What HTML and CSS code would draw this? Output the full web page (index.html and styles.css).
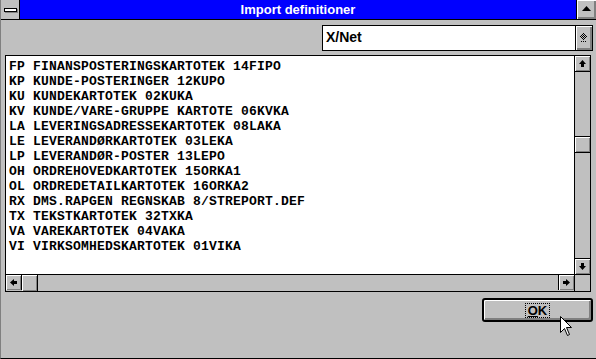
FILE: index.html
```html
<!DOCTYPE html>
<html lang="da">
<head>
    <meta charset="UTF-8">
    <title>Import definitioner</title>
    <link rel="stylesheet" href="styles.css">
</head>
<body>
    <div class="dialog">
        <div class="titlebar">
            <div class="sysmenu"><span class="sysbar"></span></div>
            <div class="title">Import definitioner</div>
            <div class="maxbtn">
                <svg width="9" height="5" viewBox="0 0 9 5"><polygon points="4.5,0 9,5 0,5" fill="#000"/></svg>
            </div>
        </div>

        <div class="content">
            <div class="combo-row">
                <div class="combo">
                    <div class="combo-field">X/Net</div>
                    <div class="combo-btn">
                        <svg width="8" height="10" viewBox="0 0 8 10" shape-rendering="crispEdges">
                            <rect x="3" y="0" width="1" height="1"/>
                            <rect x="2" y="1" width="1" height="1"/><rect x="4" y="1" width="1" height="1"/>
                            <rect x="1" y="2" width="1" height="1"/><rect x="3" y="2" width="1" height="1"/><rect x="5" y="2" width="1" height="1"/>
                            <rect x="0" y="3" width="1" height="1"/><rect x="2" y="3" width="1" height="1"/><rect x="4" y="3" width="1" height="1"/><rect x="6" y="3" width="1" height="1"/>
                            <rect x="1" y="4" width="1" height="1"/><rect x="3" y="4" width="1" height="1"/><rect x="5" y="4" width="1" height="1"/>
                            <rect x="2" y="5" width="1" height="1"/><rect x="4" y="5" width="1" height="1"/>
                            <rect x="3" y="6" width="1" height="1"/>
                            <rect x="1" y="8" width="1" height="1"/><rect x="3" y="8" width="1" height="1"/><rect x="5" y="8" width="1" height="1"/>
                        </svg>
                    </div>
                </div>
            </div>

            <div class="listbox">
                <div class="items">FP FINANSPOSTERINGSKARTOTEK 14FIPO
KP KUNDE-POSTERINGER 12KUPO
KU KUNDEKARTOTEK 02KUKA
KV KUNDE/VARE-GRUPPE KARTOTE 06KVKA
LA LEVERINGSADRESSEKARTOTEK 08LAKA
LE LEVERANDØRKARTOTEK 03LEKA
LP LEVERANDØR-POSTER 13LEPO
OH ORDREHOVEDKARTOTEK 15ORKA1
OL ORDREDETAILKARTOTEK 16ORKA2
RX DMS.RAPGEN REGNSKAB 8/STREPORT.DEF
TX TEKSTKARTOTEK 32TXKA
VA VAREKARTOTEK 04VAKA
VI VIRKSOMHEDSKARTOTEK 01VIKA</div>
                <div class="vscroll">
                    <div class="sbtn sbtn-up">
                        <svg width="7" height="7" viewBox="0 0 7 7"><polygon points="3.5,0 7,4 5,4 5,7 2,7 2,4 0,4" fill="#000"/></svg>
                    </div>
                    <div class="vtrack"><div class="thumb"></div></div>
                    <div class="sbtn sbtn-down">
                        <svg width="7" height="7" viewBox="0 0 7 7"><polygon points="3.5,7 7,3 5,3 5,0 2,0 2,3 0,3" fill="#000"/></svg>
                    </div>
                </div>
                <div class="hscroll">
                    <div class="sbtn sbtn-left">
                        <svg width="7" height="7" viewBox="0 0 7 7"><polygon points="0,3.5 4,0 4,2 7,2 7,5 4,5 4,7" fill="#000"/></svg>
                    </div>
                    <div class="hthumb"></div>
                    <div class="htrack"></div>
                    <div class="sbtn sbtn-right">
                        <svg width="7" height="7" viewBox="0 0 7 7"><polygon points="7,3.5 3,0 3,2 0,2 0,5 3,5 3,7" fill="#000"/></svg>
                    </div>
                </div>
                <div class="corner"></div>
            </div>

            <div class="button-row">
                <button class="btn-ok"><span class="focus"><u>O</u>K</span></button>
            </div>
        </div>

        <svg class="cursor" width="13" height="21" viewBox="0 0 13 21">
            <polygon points="0.5,0.5 0.5,16.5 4.5,12.5 7.5,19.5 9.5,18.5 6.5,11.5 11.5,11.5" fill="#fff" stroke="#000" stroke-width="1"/>
        </svg>
    </div>
</body>
</html>
```

FILE: styles.css
```css
* {
    margin: 0;
    padding: 0;
    box-sizing: border-box;
}

body {
    background: #c0c0c0;
    font-family: 'Liberation Sans', Arial, sans-serif;
}

.dialog {
    position: relative;
    width: 596px;
    height: 359px;
    background: #c0c0c0;
    border-left: 1px solid #808080;
    border-bottom: 1px solid #000;
    overflow: hidden;
}

/* title bar */
.titlebar {
    display: flex;
    height: 20px;
    border-bottom: 1px solid #000;
}

.sysmenu {
    width: 19px;
    background: #c0c0c0;
    border-right: 1px solid #000;
    display: flex;
    align-items: center;
    justify-content: center;
}

.sysbar {
    display: block;
    width: 13px;
    height: 4px;
    background: #fff;
    border: 1px solid #000;
    box-shadow: 1px 1px 0 #808080;
}

.title {
    flex: 1;
    background: #0000ff;
    color: #fff;
    font-weight: bold;
    font-size: 13px;
    line-height: 19px;
    text-align: center;
}

.maxbtn {
    width: 20px;
    border-left: 1px solid #000;
    background: #c0c0c0;
    box-shadow: inset 1px 1px 0 #fff, inset -2px -2px 0 #808080;
    display: flex;
    align-items: center;
    justify-content: center;
    padding-bottom: 2px;
}

/* content */
.content {
    padding: 5px 3px 0 4px;
}

.combo-row {
    display: flex;
    justify-content: flex-end;
}

.combo {
    display: flex;
    width: 271px;
    height: 26px;
    border: 1px solid #000;
    background: #fff;
}

.combo-field {
    flex: 1;
    font-weight: bold;
    font-size: 14px;
    line-height: 22px;
    padding-left: 3px;
    color: #000;
}

.combo-btn {
    width: 17px;
    border-left: 1px solid #000;
    background: #c0c0c0;
    box-shadow: inset 1px 1px 0 #fff, inset -2px -2px 0 #808080;
    display: flex;
    align-items: center;
    justify-content: center;
    padding-bottom: 1px;
}

.listbox {
    display: grid;
    grid-template-columns: 1fr 16px;
    grid-template-rows: 1fr 17px;
    width: 586px;
    height: 237px;
    margin-top: 4px;
    border: 1px solid #000;
    background: #fff;
}

.items {
    padding: 3px 0 0 3px;
    font-family: 'Liberation Mono', 'DejaVu Sans Mono', monospace;
    font-weight: bold;
    font-size: 13px;
    letter-spacing: 0.2px;
    line-height: 15px;
    white-space: pre;
    overflow: hidden;
    color: #000;
}

.sbtn {
    width: 15px;
    height: 15px;
    background: #c0c0c0;
    box-shadow: inset 1px 1px 0 #fff, inset -1px -1px 0 #808080;
    display: flex;
    align-items: center;
    justify-content: center;
    flex-shrink: 0;
}

.vscroll {
    display: flex;
    flex-direction: column;
    border-left: 1px solid #000;
    background: #c0c0c0;
}

.sbtn-up {
    height: 16px;
    border-bottom: 1px solid #000;
}

.sbtn-down {
    height: 16px;
    border-top: 1px solid #000;
}

.vtrack {
    flex: 1;
    padding-top: 64px;
}

.thumb {
    height: 17px;
    border-top: 1px solid #000;
    border-bottom: 1px solid #000;
    background: #c0c0c0;
    box-shadow: inset 1px 1px 0 #fff, inset -1px -1px 0 #808080;
}

.hscroll {
    display: flex;
    border-top: 1px solid #000;
    background: #c0c0c0;
}

.sbtn-left {
    width: 16px;
    border-right: 1px solid #000;
}

.hthumb {
    width: 16px;
    border-right: 1px solid #000;
    background: #c0c0c0;
    box-shadow: inset 1px 1px 0 #fff, inset -1px -1px 0 #808080;
}

.htrack {
    flex: 1;
}

.sbtn-right {
    width: 16px;
    border-left: 1px solid #000;
}

.corner {
    border-top: 1px solid #000;
    border-left: 1px solid #000;
    background: #c0c0c0;
}

/* OK button */
.button-row {
    display: flex;
    justify-content: flex-end;
    margin-top: 6px;
}

.btn-ok {
    width: 111px;
    height: 24px;
    border: 2px solid #000;
    border-radius: 3px;
    background: #c0c0c0;
    box-shadow: inset 1px 1px 0 #fff, inset -2px -2px 0 #808080;
    font-family: 'Liberation Sans', Arial, sans-serif;
    font-weight: bold;
    font-size: 13px;
    color: #000;
    display: flex;
    align-items: center;
    justify-content: center;
}

.focus {
    padding: 0 2px;
    border: 1px dotted #000;
    line-height: 13px;
}

.cursor {
    position: absolute;
    left: 559px;
    top: 316px;
}
```
